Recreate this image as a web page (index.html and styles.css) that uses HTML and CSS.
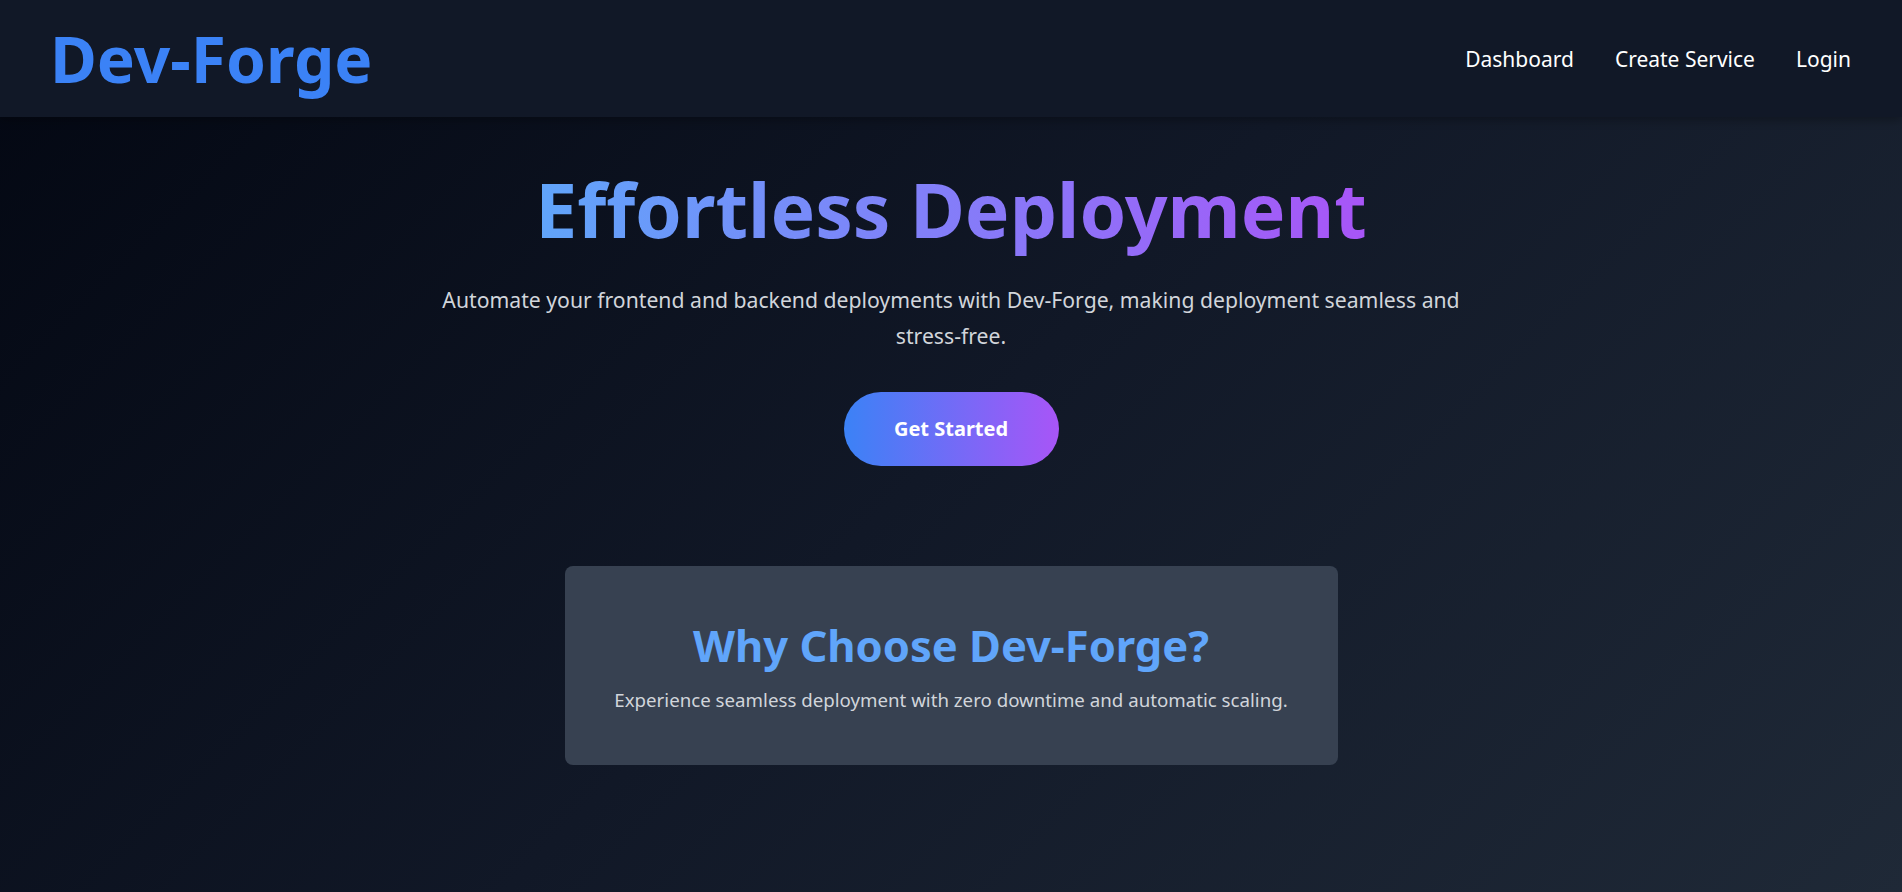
FILE: index.html
```html
<!DOCTYPE html>
<html lang="en">
<head>
<meta charset="utf-8">
<title>Dev-Forge</title>
<link rel="stylesheet" href="styles.css">
</head>
<body>
<div class="page">
  <header class="topbar">
    <div class="logo">Dev-Forge</div>
    <nav class="nav">
      <a href="#">Dashboard</a>
      <a href="#">Create Service</a>
      <a href="#">Login</a>
    </nav>
  </header>
  <main class="hero">
    <h1 class="hero-title">Effortless Deployment</h1>
    <p class="hero-sub">Automate your frontend and backend deployments with Dev-Forge, making deployment seamless and stress-free.</p>
    <a class="cta" href="#">Get Started</a>
    <section class="card">
      <h2 class="card-title">Why Choose Dev-Forge?</h2>
      <p class="card-text">Experience seamless deployment with zero downtime and automatic scaling.</p>
    </section>
  </main>
</div>
</body>
</html>
```

FILE: styles.css
```css
* { box-sizing: border-box; }
html, body { margin: 0; padding: 0; height: 100%; }
body {
  font-family: "Noto Sans", "Open Sans", sans-serif;
  color: #fff;
  background: #030712;
}
.page {
  min-height: 892px;
  background: linear-gradient(135deg, #030712 0%, #111827 50%, #1f2937 100%);
  display: flex;
  flex-direction: column;
}
.topbar {
  height: 117px;
  background: #111827;
  display: flex;
  align-items: center;
  justify-content: space-between;
  padding: 0 51px 0 50px;
  box-shadow: 0 4px 8px rgba(0,0,0,0.25);
}
.logo {
  font-size: 64px;
  font-weight: 700;
  line-height: 1;
  color: #3b82f6;
}
.nav {
  display: flex;
  gap: 41px;
}
.nav a {
  color: #fff;
  text-decoration: none;
  font-size: 21px;
}
.hero {
  display: flex;
  flex-direction: column;
  align-items: center;
  text-align: center;
  padding-top: 46px;
}
.hero-title {
  margin: 0;
  font-size: 75px;
  font-weight: 700;
  line-height: 1.25;
  background: linear-gradient(90deg, #60a5fa, #a855f7);
  -webkit-background-clip: text;
  background-clip: text;
  color: transparent;
}
.hero-sub {
  margin: 25px 0 0;
  max-width: 1030px;
  font-size: 21.2px;
  line-height: 36px;
  color: #d1d5db;
}
.cta {
  margin-top: 38px;
  width: 215px;
  height: 74px;
  border-radius: 999px;
  background: linear-gradient(90deg, #3b82f6, #a855f7);
  color: #fff;
  text-decoration: none;
  font-weight: 700;
  font-size: 20px;
  display: flex;
  align-items: center;
  justify-content: center;
}
.card {
  margin-top: 100px;
  width: 773px;
  height: 199px;
  background: #374151;
  border-radius: 8px;
  display: flex;
  flex-direction: column;
  align-items: center;
  justify-content: center;
}
.card-title {
  margin: 0;
  font-size: 43.5px;
  font-weight: 700;
  color: #60a5fa;
  line-height: 1.2;
}
.card-text {
  margin: 16px 0 0;
  font-size: 18.7px;
  color: #d1d5db;
}
```
